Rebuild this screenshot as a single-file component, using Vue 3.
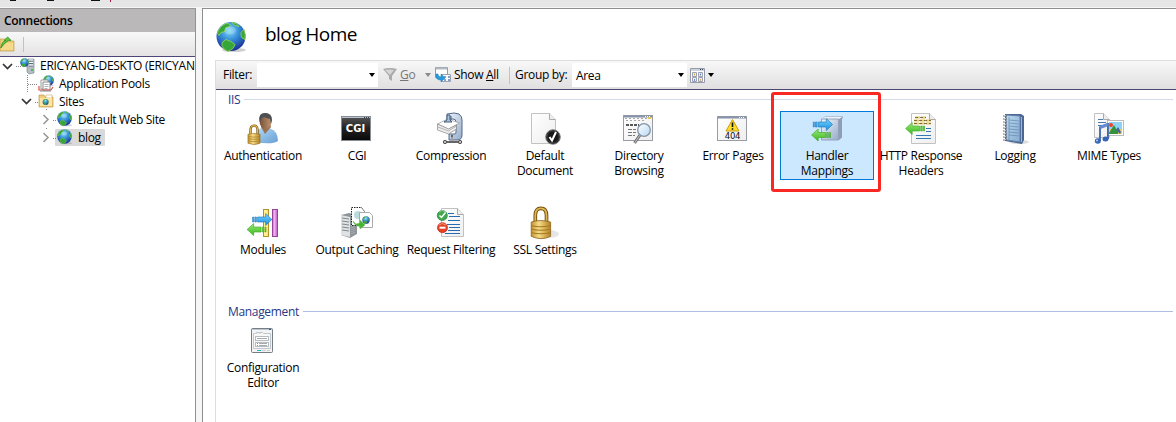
<script setup>
const blueArrow = (x, y) => `<g transform="translate(${x} ${y})"><path d="M0 4h1v5H0zM2.2 4h1.6v5H2.2zM5 4h8V.5l6.3 6L13 12.500V9H5z" fill="url(#ga)" stroke="#1874bd" stroke-width=".6"/></g>`
const greenArrow = (x, y) => `<g transform="translate(${x} ${y})"><path d="M19.300 4h-1v5h1zM17.100 4h-1.600v5h1.600zM14.300 4H7V.5L.4 6.500 7 12.500V9h7.300z" fill="url(#gg)" stroke="#38a41d" stroke-width=".6"/></g>`
const page = (x, y, w, h) => `<path d="M${x} ${y}h${w - 6}l6 6v${h - 6}h-${w}z" fill="url(#gp)" stroke="#c2c2c2"/><path d="M${x + w - 6} ${y}v6h6" fill="#eee" stroke="#aaa"/>`
const globe = (cx, cy, r) => `<g transform="translate(${cx} ${cy}) scale(${r / 14.5})"><ellipse cx="3" cy="13.500" rx="12" ry="2" fill="#777" opacity=".35"/><circle r="14.500" fill="url(#go)"/><path d="M-13.500-3Q-12-10-5-13q5 0 4 3l-4 1-1 4-4 1-2 3zM1-14q5 0 7 4l-4-1zM10-4l3-3q2 5 1 10-4-1-4-4zM-9 6l4-3 5 2 4 3-2 4-5 3q-5-2-6-6z" fill="#35a637" stroke="#9bd55b" stroke-width=".8"/><ellipse cx="-1" cy="-6" rx="6" ry="4" fill="#fff" opacity=".22"/></g>`
const padlock = (x, y, s) => `<g transform="translate(${x} ${y}) scale(${s})"><path d="M5 16V8q0-7 5.500-7T16 8v8" fill="none" stroke="#76500c" stroke-width="3.600"/><path d="M5 16V8q0-7 5.500-7T16 8v8" fill="none" stroke="#ddb654" stroke-width="1.700"/><path d="M1 14.500q9-3 19 0v14q-9 4.500-19 0z" fill="url(#gl)" stroke="#8c641a" stroke-width=".8"/><path d="M1.500 18q9 2 18 0M1.500 21.500q9 2 18 0M1.500 25q9 2 18 0" fill="none" stroke="#a47820"/></g>`
const windowFrame = (y, h) => `<rect x=".5" y="${y + .5}" width="29" height="${h - 1}" fill="url(#gp)" stroke="#989ca3"/><path d="M1 ${y + 1.500}h28" stroke="#8793a8" stroke-width="2"/><path d="M22 ${y + 1.500}h1m1 0h1m1 0h1" stroke="#fff"/>`

const icons = {
  auth: `<path d="M8 29q0-14 9-14.500l6 1Q31 18 31 28q-6 4-23 1z" fill="url(#gb)"/><path d="M14 14l4 7 6-7-1-4h-8z" fill="#9b7151"/><ellipse cx="18.500" cy="8" rx="6" ry="8" fill="url(#gf)"/><path d="M12.500 8Q11 0 18 0q7 0 7 7l-1 4-1-5q-4-1-6-2-3 1-4 5z" fill="#4d4f51"/>${padlock(.3, 12, .64)}`,
  cgi: `<rect x=".5" y="3.500" width="29" height="24" fill="url(#gk)" stroke="#888d94"/><path d="M1 4.500h28" stroke="#b8c2ce"/><path d="M23 4.500h1m1 0h1m1 0h1" stroke="#345"/><text x="14.500" y="19" text-anchor="middle" font-family="DejaVu Sans" font-size="10" font-weight="bold" letter-spacing="0" fill="#fff">CGI</text>`,
  compress: `<path d="M12 3V1q8-2 12 0 3 2 3 6v15q0 5-5 5h-8v-6h6q1 0 1-2V9q0-3-3-3h-6z" fill="url(#gc)" stroke="#52698c"/><path d="M2.500 11l10-5 12 4-11 6z" fill="#fff" stroke="#999" stroke-width=".7"/><path d="M2.500 11v6l11 4 8-5v-4l-8 4z" fill="#ededed" stroke="#888" stroke-width=".7"/><path d="M3 14l10.500 4 8-5" fill="none" stroke="#999" stroke-width=".7"/><path d="M12 2v5l-3 2h8l-2-2V2zM16 3v4" fill="#abc2dd" stroke="#435c7b"/><path d="M17 22v6M11 29h13" stroke="#666" stroke-width="2"/><path d="M17 24v4" stroke="#ddd"/><circle cx="10" cy="29" r="1.700" fill="#bbb" stroke="#555"/><circle cx="25" cy="29" r="1.700" fill="#bbb" stroke="#555"/>`,
  document: `${page(2.5, .5, 24, 30)}<circle cx="24" cy="24" r="7.300" fill="#181818" stroke="#888"/><circle cx="24" cy="24" r="6" fill="none" stroke="#555" stroke-width=".6"/><path d="M20.500 24l2.500 3.500L27 19" fill="none" stroke="#fff" stroke-width="2"/>`,
  directory: `${windowFrame(2, 26)}<path d="M2 5.500h22M3 7.500h18" stroke="#aaa" stroke-dasharray="2 2"/><path d="M25 4h3v2h-3z" fill="#e6c85a"/><path d="M3 12h13" stroke="#222" stroke-width="1.500" stroke-dasharray="3 1"/><path d="M5 16.500h8M5 19.500h8M5 22.500h7" stroke="#777" stroke-dasharray="4 1"/><path d="M17 22l-5.500 8" stroke="#656565" stroke-width="3"/><path d="M17 22l-5.500 8" stroke="#bbb" stroke-width="1.300"/><circle cx="21" cy="17" r="6.300" fill="url(#glass)" stroke="#8494a8" stroke-width="1.300"/>`,
  error: `${windowFrame(3, 25)}<path d="M15.500 6.500l6.500 11.500H9z" fill="#ffdc28" stroke="#c99d13" stroke-linejoin="round"/><path d="M15.500 9.500v4.500m0 1.300v1.400" stroke="#111" stroke-width="1.600"/><text x="15.500" y="26" text-anchor="middle" font-family="DejaVu Sans" font-size="8.500" letter-spacing="-.3" fill="#111">404</text>`,
  handler: `<path d="M11 6l3-2.500h18l-1 3v18l-3 2.500H10z" fill="#8f9db7"/><path d="M11 6l3-2h17L28 6z" fill="#f1f5fb"/><path d="M10.500 6h17v21h-17z" fill="url(#gc)" stroke="#93a1ba"/>${blueArrow(2.3, 5)}${greenArrow(.2, 15.500)}`,
  headers: `${page(6.5, .5, 24, 30)}<path d="M10 4.500h11M9 7.500h17M9 10.500h17" stroke="#e5ca6f" stroke-width="2" stroke-dasharray="5 1"/><path d="M10 4.500h11M9 7.500h17M9 10.500h17" stroke="#504627" stroke-width=".7" stroke-dasharray="3 2"/><path d="M21 15.500h5M21 18.500h5M11 22.500h15M11 25.500h15" stroke="#3377b6"/>${greenArrow(.2, 9)}`,
  logging: `<ellipse cx="20" cy="29" rx="10" ry="2" fill="#aaa" opacity=".4"/><path d="M6 1h16l3 2v24l-2 4-17-3z" fill="#4c6795"/><path d="M7 2l14 1v26L7 27z" fill="url(#gn)" stroke="#607fa8"/><path d="M10 4v23M10 7l10 1M10 10l10 1M10 13l10 1M10 16l10 1M10 19l10 1M10 22l10 1" stroke="#638ab2" stroke-width=".7"/><path d="M22.500 4v25" stroke="#9bb5da"/><path d="M4 3h4M4 6h4M4 9h4M4 12h4M4 15h4M4 18h4M4 21h4M4 24h4M4 27h4" stroke="#666"/><path d="M5 2.500h2M5 5.500h2M5 8.500h2M5 11.500h2M5 14.500h2M5 17.500h2M5 20.500h2M5 23.500h2M5 26.500h2" stroke="#eee" stroke-width=".6"/>`,
  mime: `${page(1.5, .5, 15, 24)}<path d="M5 6.500h5M5 9.500h8M5 12.500h6" stroke="#4c7aae"/><rect x="14.500" y="7.500" width="16" height="15" fill="#fff" stroke="#bbb"/><path d="M16 9h13v12H16z" fill="#8fd2f8"/><path d="M16 16h13v5H16z" fill="#e5cf57"/><circle cx="18" cy="12" r="2" fill="#ef4425"/><path d="M16 20l5-8 4 7v2h-9z" fill="#35913b"/><path d="M23 17l2-3 3 5-1 2z" fill="#47679e"/><path d="M7 28V14l8-3v15" fill="none" stroke="#28539d" stroke-width="1.600"/><path d="M7 14.500l8-3" stroke="#658bd1" stroke-width="3"/><ellipse cx="4.800" cy="28" rx="3" ry="2.700" fill="#3866b7"/><ellipse cx="12.500" cy="26" rx="3" ry="2.500" fill="#3866b7"/><circle cx="4" cy="27.500" r="1" fill="#b8d0f4"/>`,
  modules: `<rect x="16.500" y="2.500" width="5" height="27" fill="#ffe66c" stroke="#b4902b"/><path d="M18.500 3v26" stroke="#fff6b5" stroke-width="2"/><rect x="25.500" y="2.500" width="5" height="27" fill="#cf75d0" stroke="#944399"/><path d="M27.500 3v26" stroke="#efaff0" stroke-width="2"/>${blueArrow(5.600, 6)}${greenArrow(-.3, 16)}`,
  caching: `<path d="M0 8l8-2 8 2v19l-7 4-9-3z" fill="#8f9598"/><path d="M0 8l9 2v20l-9-2z" fill="#dfe2e3"/><path d="M1 11l7 1M1 14l7 1M1 17l7 1M1 20l7 1M1 23l7 1" stroke="#81898c"/><path d="M11 12v16M13 11v16" stroke="#bbb" stroke-dasharray="1 1"/><path d="M10.500.5h10l3 4v14h-13z" fill="#fff" stroke="#222" stroke-dasharray="1.500 1"/><circle cx="17" cy="8" r="4" fill="#badbdc"/><path d="M18.500 5.500h10l3 3v12h-13z" fill="#fff" stroke="#aaa"/>${globe(25, 13, 3.700)}<path d="M12 14l3 3 4-1v-3l5 5-5 4v-3q-5 1-7-5z" fill="#45b42d" stroke="#73b963" stroke-width=".5"/>`,
  filtering: `${page(6.5, 1.500, 22, 28)}<path d="M13 6.500h6M14 9.500h11M13 13.500h12M12 17.500h13M14 20.500h11M13 23.500h12M10 26.500h15" stroke="#286baf"/><circle cx="7.300" cy="8.500" r="5" fill="#42a84d" stroke="#208036" stroke-width=".7"/><path d="M4.500 8.500l2 2 4-5" fill="none" stroke="#fff" stroke-width="1.500"/><circle cx="7.500" cy="20.700" r="5" fill="#e54125" stroke="#c22715" stroke-width=".7"/><path d="M4.500 20.700h6" stroke="#fff" stroke-width="2"/><path d="M4 5q3-3 7 0M4 18q3-3 7 0" fill="none" stroke="#fff" opacity=".45"/>`,
  ssl: `<ellipse cx="20" cy="27" rx="10" ry="4" fill="#aaa" opacity=".3"/>${padlock(1.200, .3, 1.020)}`,
  config: `<rect x="4.500" y="3.500" width="21" height="24" rx="1" fill="#f4f4f4" stroke="#777d83"/><path d="M5 4.500h20" stroke="#bbc8d5"/><path d="M22 4.500h2" stroke="#315980"/><path d="M6.500 8.500v15h17v-15h-7l-1-1h-6l-1 1zM10 7v2m3-2v2" fill="#f8f8f8" stroke="#c0c7cc"/><rect x="8.500" y="11.500" width="13" height="4" fill="#fff" stroke="#b5bcc1"/><path d="M10 13.500h10" stroke="#aaa"/><rect x="8.500" y="17.500" width="13" height="4" fill="#fff" stroke="#b5bcc1"/><path d="M12 18.500h8M12 20.500h8" stroke="#aaa"/><path d="M10 18.500h1M10 20.500h1M10 25.500h4" stroke="#16b7d3"/><path d="M15 25.500h4M20 25.500h3" stroke="#ccc"/>`,
  folderUp: `<path d="M0 3h7l1 2h6v10H0z" fill="#efce75" stroke="#b99443" stroke-width=".6"/><path d="M1 7h12v7H1z" fill="#f7d98a"/><path d="M1 13q1-8 6-9H5l4-4 4 4h-3q-5 3-9 9z" transform="translate(0 1) scale(.85)" fill="#60c53a" stroke="#32912c"/>`,
  server: `<path d="M8 2h6v14l-5 1-2-2V4z" fill="#b5bdc5" stroke="#747f88" stroke-width=".6"/><path d="M9 4h4M9 6.500h4M9 9h4" stroke="#5a6b78"/><path d="M9 3h4M9 5.500h4M9 8h4" stroke="#fff"/><circle cx="12" cy="13" r="1" fill="#37b636"/>${globe(4.500, 5.500, 4.300)}`,
  pools: `${globe(10.500, 5.500, 5.300)}<path d="M3 5h7v9H3z" fill="#fff" stroke="#999"/><path d="M5 7h7v8H5z" fill="#fff" stroke="#888"/><path d="M6.500 9.500h4m-4 2h4m-4 2h3" stroke="#abb4bd"/><path d="M1 11v4h12l2-3" fill="none" stroke="#e75143" stroke-width="1.200"/><path d="M2 16h11" stroke="#888"/>`,
  sites: `<path d="M1 2h5l1 2h8v10H1z" fill="#f2ce78" stroke="#bd994e" stroke-width=".7"/><path d="M8 2h6v3H8z" fill="#fff" stroke="#ccac69" stroke-width=".6"/><path d="M2 5h12v8H2z" fill="#ffe5a3"/>${globe(7.600, 9, 3)}`,
  globe: globe(7.500, 7.500, 7.300)
}

const iis = [
  { label: ['Authentication'], icon: 'auth' },
  { label: ['CGI'], icon: 'cgi' },
  { label: ['Compression'], icon: 'compress' },
  { label: ['Default', 'Document'], icon: 'document' },
  { label: ['Directory', 'Browsing'], icon: 'directory' },
  { label: ['Error Pages'], icon: 'error' },
  { label: ['Handler', 'Mappings'], icon: 'handler', selected: true },
  { label: ['HTTP Response', 'Headers'], icon: 'headers' },
  { label: ['Logging'], icon: 'logging' },
  { label: ['MIME Types'], icon: 'mime' },
  { label: ['Modules'], icon: 'modules' },
  { label: ['Output Caching'], icon: 'caching' },
  { label: ['Request Filtering'], icon: 'filtering' },
  { label: ['SSL Settings'], icon: 'ssl' }
]
const groups = [
  { name: 'IIS', key: 'iis', items: iis },
  { name: 'Management', key: 'management', items: [{ label: ['Configuration', 'Editor'], icon: 'config' }] }
]
const tree = [
  { label: 'ERICYANG-DESKTO (ERICYAN', icon: 'server', level: 0, arrow: 'open' },
  { label: 'Application Pools', icon: 'pools', level: 1, arrow: 'none' },
  { label: 'Sites', icon: 'sites', level: 1, arrow: 'open' },
  { label: 'Default Web Site', icon: 'globe', level: 2, arrow: 'closed' },
  { label: 'blog', icon: 'globe', level: 2, arrow: 'closed', selected: true }
]
</script>

<template>
  <div class="app">
    <svg class="defs" width="0" height="0">
      <defs>
        <linearGradient id="ga" x2="0" y2="1"><stop stop-color="#79d5ff"/><stop offset="1" stop-color="#168ee0"/></linearGradient>
        <linearGradient id="gg" x2="0" y2="1"><stop stop-color="#98e779"/><stop offset="1" stop-color="#3cba1e"/></linearGradient>
        <linearGradient id="gp" x2="1" y2="1"><stop stop-color="#fff"/><stop offset="1" stop-color="#eeeeef"/></linearGradient>
        <linearGradient id="gb" x2="1" y2="1"><stop stop-color="#b6dcf7"/><stop offset="1" stop-color="#669ed4"/></linearGradient>
        <linearGradient id="gf"><stop stop-color="#765238"/><stop offset="1" stop-color="#bf9370"/></linearGradient>
        <linearGradient id="gk" x2="0" y2="1"><stop stop-color="#555"/><stop offset=".5" stop-color="#222"/><stop offset="1" stop-color="#080808"/></linearGradient>
        <linearGradient id="gc" x2="1" y2="1"><stop stop-color="#f1f6fc"/><stop offset="1" stop-color="#94acca"/></linearGradient>
        <linearGradient id="glass" x2="1" y2="1"><stop stop-color="#fff"/><stop offset="1" stop-color="#b5d9f3"/></linearGradient>
        <linearGradient id="gn" x2="1" y2="1"><stop stop-color="#bdd9ef"/><stop offset="1" stop-color="#86acd1"/></linearGradient>
        <linearGradient id="gl"><stop stop-color="#c49430"/><stop offset=".4" stop-color="#f4dc87"/><stop offset="1" stop-color="#b68123"/></linearGradient>
        <radialGradient id="go" cx=".45" cy=".3" r=".75"><stop stop-color="#80d9f5"/><stop offset=".45" stop-color="#328bd7"/><stop offset="1" stop-color="#16258c"/></radialGradient>
      </defs>
    </svg>
    <header class="strip">
      <svg width="120" height="7"><path d="M10 .5h6M47 .5h7M91 .5h9" stroke="#111" stroke-width="1.2"/><path d="M110.500 0v2" stroke="#a51b46"/></svg>
    </header>
    <aside class="connections">
      <h2>Connections</h2>
      <div class="sidebar-tools"><svg width="15" height="17" v-html="icons.folderUp"/><i/></div>
      <div class="tree">
        <svg class="tree-lines" width="70" height="90"><path d="M16 10.500h5M27.500 19v18M28 28.500h10M35 46.500h4M46.500 53v2M46.500 72v2M53 64.500h4M53 82.500h4" fill="none" stroke="#888" stroke-dasharray="1 1"/></svg>
        <div v-for="node in tree" :key="node.label" class="node" :class="['level-' + node.level, { active: node.selected }]">
          <svg class="arrow" width="14" height="14"><path v-if="node.arrow === 'open'" d="M3 5l4.500 4.500L12 5" fill="none" stroke="#333" stroke-width="1.700"/><path v-if="node.arrow === 'closed'" d="M5.500 3l4.500 4.500L5.500 12" fill="none" stroke="#999" stroke-width="1.600"/></svg>
          <span class="node-body"><svg width="16" height="17" v-html="icons[node.icon]"/><span>{{ node.label }}</span></span>
        </div>
      </div>
    </aside>
    <main>
      <div class="title"><svg width="33" height="34" v-html="globe(15, 15.500, 14.500)"/><h1>blog Home</h1></div>
      <section class="workspace">
        <div class="toolbar">
          <label class="filter-label">Filter:</label>
          <div class="combo filter"><span></span><b class="down"/></div>
          <svg class="funnel" width="16" height="16"><path d="M0 2q7-2 14 0L9 9v5l-3-2V9z" fill="#aaa"/><path d="M2 3q5-1 9 0L7 8z" fill="#d5d5d5"/></svg>
          <span class="go"><u>G</u>o</span><b class="down muted"/>
          <svg class="show-icon" width="17" height="17"><path d="M.5.5h12v10H.5z" fill="#fff" stroke="#989da5"/><path d="M1 1.500h11" stroke="#b3bbc5" stroke-width="2"/><path d="M6.500 7.500h9v7h-9z" fill="#f8faff" stroke="#99a5b5"/><path d="M9 10h2m2 0h2m-6 3h2m2 0h2" stroke="#6684b3" stroke-width="1.500"/><path d="M1 7v2q0 4 5 4v2l4-4-4-4v3q-3 0-3-3z" fill="#249bdc" stroke="#1976bb" stroke-width=".5"/></svg>
          <span class="show">Show <u>A</u>ll</span><i class="separator"/>
          <label class="group-label">Group by:</label>
          <div class="combo area"><span>Area</span><b class="down"/></div>
          <svg class="view-icon" width="15" height="15"><path d="M.5.5h14v14H.5z" fill="#fff" stroke="#959ba8"/><path d="M1 2h13" stroke="#9da7ba"/><path d="M10 1.500h1m1 0h1" stroke="#345"/><path d="M2.500 4.500h4v4h-4zM8.500 4.500h4v4h-4zM2.500 9.500h4v4h-4zM8.500 9.500h4v4h-4z" fill="#e9edf4" stroke="#878d9f" stroke-width=".8"/><path d="M4 6.500h1M10 12h1" stroke="#d99b33" stroke-width="1.500"/><path d="M4 12h1M10 6.500h1" stroke="#4472bd" stroke-width="1.500"/></svg><b class="down"/>
        </div>
        <section v-for="group in groups" :key="group.key" class="group" :class="group.key">
          <h3>{{ group.name }}</h3>
          <div class="items">
            <div v-for="item in group.items" :key="item.icon" class="item" :class="{ selected: item.selected }">
              <svg width="32" height="32" v-html="icons[item.icon]"/>
              <span class="label" :class="item.icon"><span v-for="line in item.label" :key="line">{{ line }}</span></span>
              <i v-if="item.selected" class="callout"/>
            </div>
          </div>
        </section>
      </section>
    </main>
  </div>
</template>

<style scoped>
* { box-sizing: border-box; }
.app { width: 1176px; height: 422px; overflow: hidden; display: grid; grid-template: 8px 414px / 196px 980px; background: #f6f6f6; color: #000; font: 12px/15px "Open Sans", "Noto Sans", sans-serif; letter-spacing: -.31px; }
.defs { position: absolute; }
svg { display: block; flex: none; overflow: visible; }
.strip { grid-column: 1 / 3; height: 7px; background: #e7e6e6; overflow: hidden; }
.connections { border-right: 1px solid #929292; background: #fff; overflow: hidden; border-top: 1px solid #999; }
h2 { margin: 0; height: 23px; padding: 4px; background: #bbb8ba; font-size: 12px; line-height: 15px; font-weight: 600; letter-spacing: -.32px; }
.sidebar-tools { height: 25px; display: flex; align-items: center; background: linear-gradient(#f8f8f8, #e4e2e2); border-bottom: 1px solid #4e4478; }
.sidebar-tools i { width: 1px; height: 15px; background: #c5c5ac; margin-left: 8px; }
.tree { position: relative; }
.tree-lines { position: absolute; inset: -1px auto auto 0; }
.node { height: 18px; display: flex; align-items: center; white-space: nowrap; }
.level-0 { height: 17px; letter-spacing: -.27px; }
.level-1 { padding-left: 19px; }
.level-2 { padding-left: 38px; letter-spacing: -.37px; }
.arrow { margin-right: 4px; }
.level-1 .arrow, .level-2 .arrow { margin-right: 3px; }
.node-body { height: 17px; display: flex; align-items: center; gap: 4px; padding-right: 3px; }
.level-0 .node-body { padding: 0 0 0 2px; }
.level-1 .node-body { padding-left: 2px; gap: 5px; }
.level-1 .node-body > span { padding-top: 1px; }
.level-2 .node-body { padding-left: 2px; gap: 5px; }
.level-2 .node-body > span { padding-top: 1px; }
.active .node-body { background: #d9d9d9; border-radius: 1px; padding-right: 4px; }
main { margin-left: 6px; border-left: 1px solid #8e8e8e; border-top: 1px solid #8e8e8e; background: #fff; }
.title { height: 51px; display: flex; padding: 12px 0 0 13px; }
h1 { margin: 0 0 0 16px; font-size: 19px; line-height: 26px; font-weight: 400; letter-spacing: -.55px; }
.workspace { margin-left: 12px; border-left: 1px solid #ddd; height: 363px; }
.toolbar { height: 30px; border-top: 1px solid #ddd; border-bottom: 1px solid #4c4770; background: linear-gradient(#f8f8f8, #e1dfdf); display: flex; align-items: center; }
.toolbar > span, .toolbar > label { padding-bottom: 2px; }
.filter-label { margin-left: 7px; width: 34px; }
.combo { height: 24px; background: #fff; display: flex; align-items: center; justify-content: space-between; }
.filter { width: 121px; padding-right: 3px; }
.down { width: 0; height: 0; flex: none; border: 3px solid transparent; border-top: 4px solid #000; border-bottom: 0; }
.funnel { margin-left: 5px; }
.go { margin-left: 1px; width: 16px; color: #777; }
.muted { margin-left: 9px; border-top-color: #888; }
.show-icon { margin-left: 4px; }
.show { margin-left: 2px; width: 47px; white-space: nowrap; }
.separator { width: 1px; height: 17px; background: #c5c5ac; margin-left: 8px; }
.group-label { margin-left: 5px; width: 57px; white-space: nowrap; }
.area { width: 115px; padding: 0 3px 0 4px; }
.view-icon { margin-left: 3px; }
.view-icon + .down { margin-left: 3px; }
h3 { margin: 0; height: 19px; padding-left: 12px; display: flex; align-items: center; gap: 4px; color: #273886; font-size: 12px; font-weight: 400; letter-spacing: -.33px; }
h3::after { content: ""; height: 1px; flex: 1; margin-right: 3px; background: #d5daea; }
.iis { height: 212px; }
.management h3::after { background: #aebde0; }
.items { display: grid; grid-template-columns: repeat(10, 94px); grid-auto-rows: 94px; padding-top: 2px; }
.item { position: relative; display: flex; flex-direction: column; align-items: center; height: 69px; padding-top: 2px; }
.item > svg { z-index: 1; }
.label { margin-top: 3px; display: flex; flex-direction: column; align-items: center; white-space: nowrap; z-index: 1; }
.selected { background: #cce8ff; outline: 1px solid #0078d7; outline-offset: -1px; }
.callout { position: absolute; inset: -19px -7px -12px -9px; border: 3px solid #fa2822; border-radius: 3px; }
</style>

<style>
html, body { margin: 0; background: #f6f6f6; overflow: hidden; }
</style>
